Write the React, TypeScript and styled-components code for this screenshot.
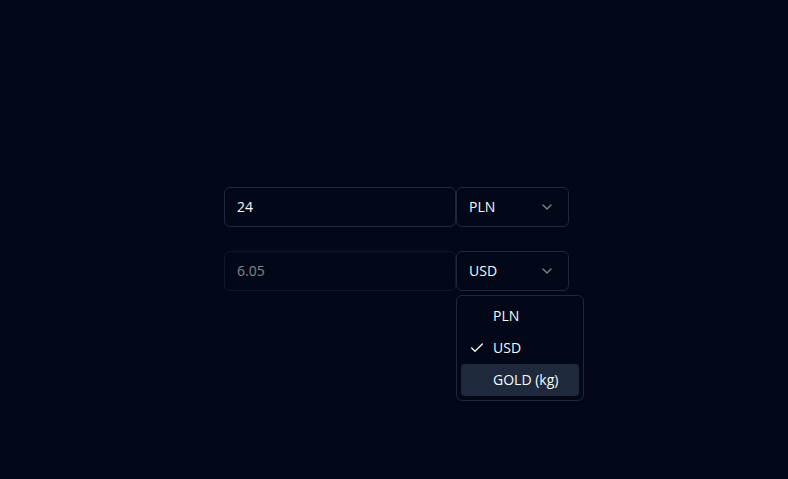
import React from "react";
import styled, { createGlobalStyle } from "styled-components";
import { ChevronDown, Check } from "lucide-react";

const Global = createGlobalStyle`
  html, body { margin: 0; padding: 0; background: #020817; }
  body { font-family: "Open Sans", "Liberation Sans", sans-serif; color: #f8fafc; }
  * { box-sizing: border-box; }
`;

const Page = styled.div`
  min-height: 479px;
  display: flex;
  align-items: center;
  justify-content: center;
  padding-left: 5px;
  padding-bottom: 2px;
`;

const Stack = styled.div`
  display: flex;
  flex-direction: column;
  gap: 24px;
`;

const Row = styled.div`
  display: flex;
  position: relative;
`;

const Input = styled.input<{ $disabled?: boolean }>`
  width: 232px;
  height: 40px;
  border: 1px solid #1e293b;
  border-radius: 6px;
  background: #020817;
  color: #f8fafc;
  font: inherit;
  font-size: 14px;
  padding: 0 12px;
  outline: none;
  opacity: ${(p) => (p.$disabled ? 0.5 : 1)};
`;

const Trigger = styled.button`
  width: 113px;
  height: 40px;
  border: 1px solid #1e293b;
  border-radius: 6px;
  background: #020817;
  color: #f8fafc;
  font: inherit;
  font-size: 14px;
  padding: 0 13px 0 12px;
  display: flex;
  align-items: center;
  justify-content: space-between;
  svg { opacity: 0.5; }
`;

const Menu = styled.div`
  position: absolute;
  left: 232px;
  top: 44px;
  width: 128px;
  padding: 4px;
  border: 1px solid #1e293b;
  border-radius: 6px;
  background: #020817;
  display: flex;
  flex-direction: column;
`;

const Item = styled.div<{ $active?: boolean }>`
  position: relative;
  height: 32px;
  border-radius: 4px;
  padding-left: 32px;
  display: flex;
  align-items: center;
  font-size: 14px;
  background: ${(p) => (p.$active ? "#1e293b" : "transparent")};
`;

const CheckMark = styled.span`
  position: absolute;
  left: 8px;
  top: 8px;
  display: flex;
`;

export default function App() {
  return (
    <>
      <Global />
      <Page>
        <Stack>
          <Row>
            <Input defaultValue="24" />
            <Trigger>
              <span>PLN</span>
              <ChevronDown size={16} />
            </Trigger>
          </Row>
          <Row>
            <Input $disabled disabled defaultValue="6.05" />
            <Trigger>
              <span>USD</span>
              <ChevronDown size={16} />
            </Trigger>
            <Menu>
              <Item>PLN</Item>
              <Item>
                <CheckMark>
                  <Check size={16} />
                </CheckMark>
                USD
              </Item>
              <Item $active>GOLD (kg)</Item>
            </Menu>
          </Row>
        </Stack>
      </Page>
    </>
  );
}
